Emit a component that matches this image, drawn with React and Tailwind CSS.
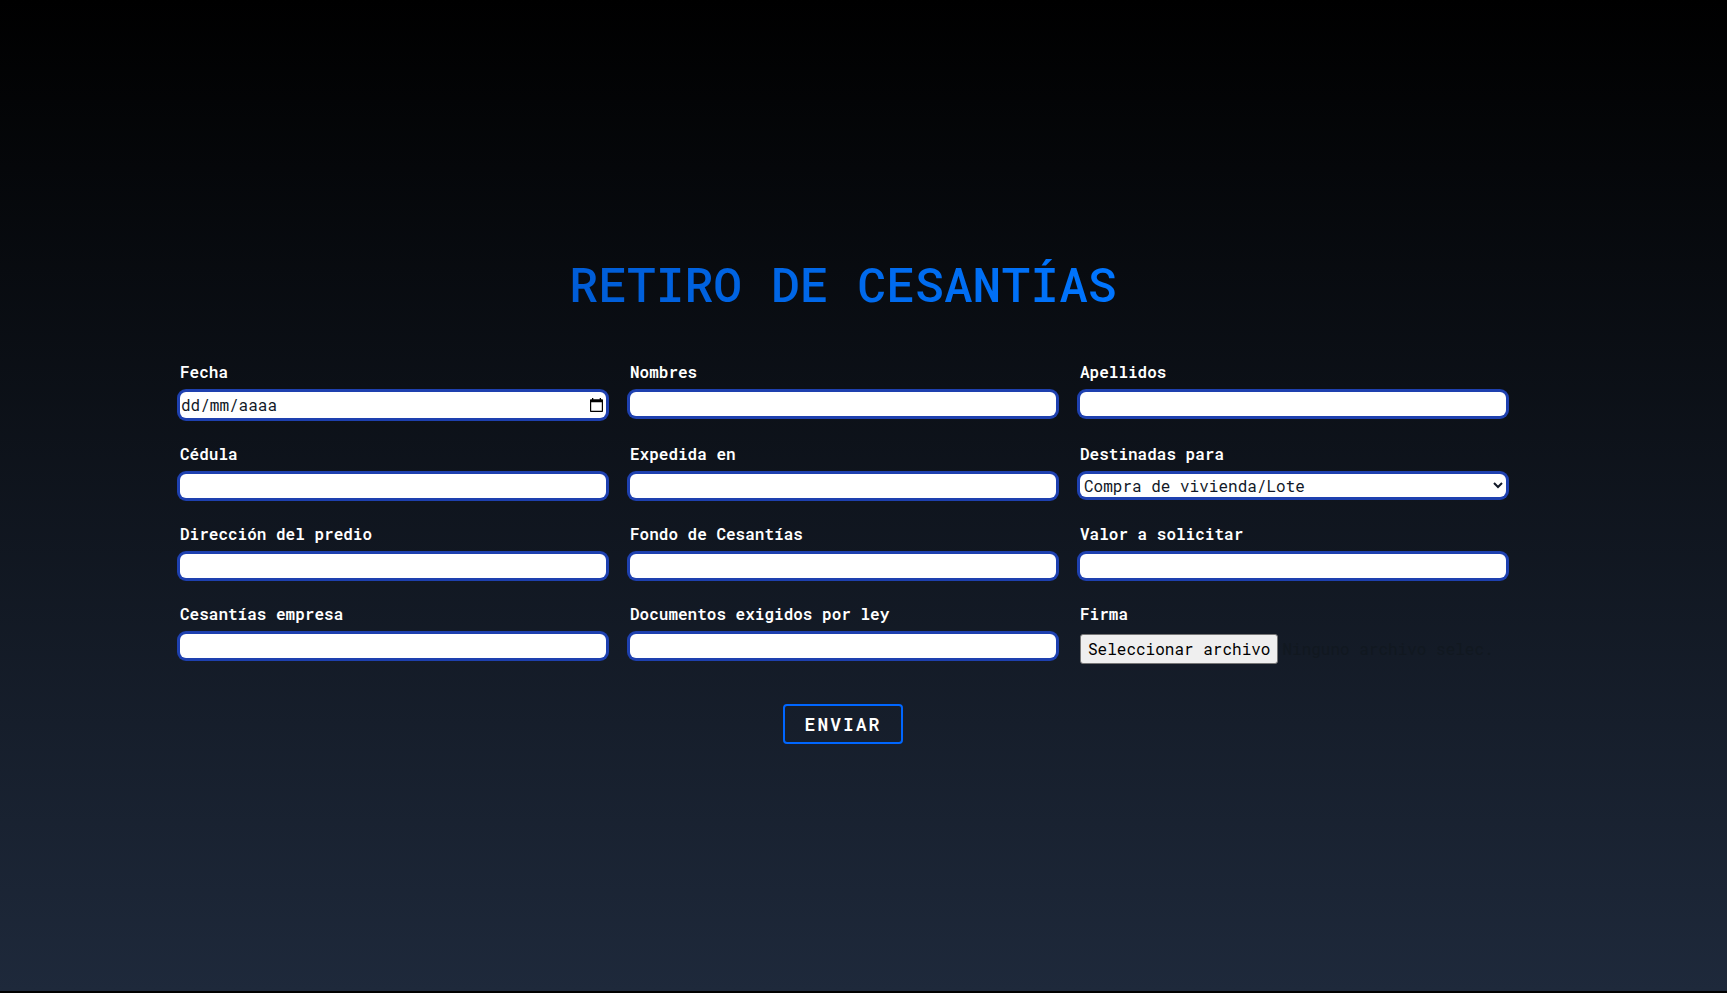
import React, { useState } from "react";

const control =
  "block w-full rounded-md bg-white text-base text-[#111827] outline-none ring-[3px] ring-[#1e40af]";

function Field({ id, label, children }) {
  return (
    <div className="flex flex-col items-stretch">
      <label htmlFor={id} className="mb-2 text-base leading-6 font-semibold text-white">
        {label}
      </label>
      {children}
    </div>
  );
}

function TextField({ id, label }) {
  return (
    <Field id={id} label={label}>
      <input id={id} name={id} type="text" className={`${control} h-6 px-px`} />
    </Field>
  );
}

function CalendarIcon() {
  return (
    <svg viewBox="0 0 13 14" className="h-[14px] w-[13px]" aria-hidden="true">
      <path
        fill="#000"
        fillRule="evenodd"
        d="M2 0h1.3v1.2h6.4V0H11v1.2h1.2c.5 0 .8.3.8.8v11.2c0 .5-.3.8-.8.8H.8c-.5 0-.8-.3-.8-.8V2c0-.5.3-.8.8-.8H2zM1.2 4.3v8.5h10.6V4.3z"
      />
    </svg>
  );
}

export default function App() {
  const [fileName, setFileName] = useState("Ninguno archivo selec.");

  return (
    <div className="min-h-screen bg-black pb-[2px] font-['Roboto_Mono','DejaVu_Sans_Mono',monospace]">
      <main className="flex min-h-[calc(100vh-2px)] flex-col items-center justify-center bg-linear-to-b/srgb from-black to-[#1e293b] pr-[41px]">
        <h1 className="mb-10 bg-linear-to-r/srgb from-[#005cd6] to-[#0075ff] bg-clip-text text-5xl leading-[72px] font-medium text-transparent">
          RETIRO DE CESANTÍAS
        </h1>
        <form
          className="flex w-full max-w-[1326px] flex-col items-center gap-10"
          onSubmit={(e) => e.preventDefault()}
        >
          <div className="grid w-full grid-cols-3 gap-6">
            <Field id="fecha" label="Fecha">
              <div className={`${control} flex h-[26px] items-center overflow-hidden pr-[3px]`}>
                <input
                  id="fecha"
                  name="fecha"
                  type="text"
                  placeholder="dd/mm/aaaa"
                  className="min-w-0 flex-1 px-px outline-none placeholder:text-[#111827]"
                />
                <button type="button" aria-label="Abrir calendario">
                  <CalendarIcon />
                </button>
              </div>
            </Field>
            <TextField id="nombres" label="Nombres" />
            <TextField id="apellidos" label="Apellidos" />
            <TextField id="cedula" label="Cédula" />
            <TextField id="expedida" label="Expedida en" />
            <Field id="destino" label="Destinadas para">
              <select id="destino" name="destino" className={`${control} h-[23px]`}>
                <option>Compra de vivienda/Lote</option>
              </select>
            </Field>
            <TextField id="direccion" label="Dirección del predio" />
            <TextField id="fondo" label="Fondo de Cesantías" />
            <TextField id="valor" label="Valor a solicitar" />
            <TextField id="empresa" label="Cesantías empresa" />
            <TextField id="documentos" label="Documentos exigidos por ley" />
            <Field id="firma" label="Firma">
              <div className="relative flex items-center gap-1 text-base">
                <input
                  id="firma"
                  name="firma"
                  type="file"
                  className="sr-only"
                  onChange={(e) => setFileName(e.target.files[0]?.name ?? "Ninguno archivo selec.")}
                />
                <label
                  htmlFor="firma"
                  className="h-[30px] rounded-[3px] border border-[#767676] bg-[#efefef] px-[7px] leading-7 whitespace-nowrap text-black"
                >
                  Seleccionar archivo
                </label>
                <span className="truncate text-[#111820]">{fileName}</span>
              </div>
            </Field>
          </div>
          <button
            type="submit"
            className="h-10 rounded border-2 border-[#0066ff] px-5 text-lg leading-8 font-semibold tracking-[2px] text-white"
          >
            ENVIAR
          </button>
        </form>
      </main>
    </div>
  );
}
